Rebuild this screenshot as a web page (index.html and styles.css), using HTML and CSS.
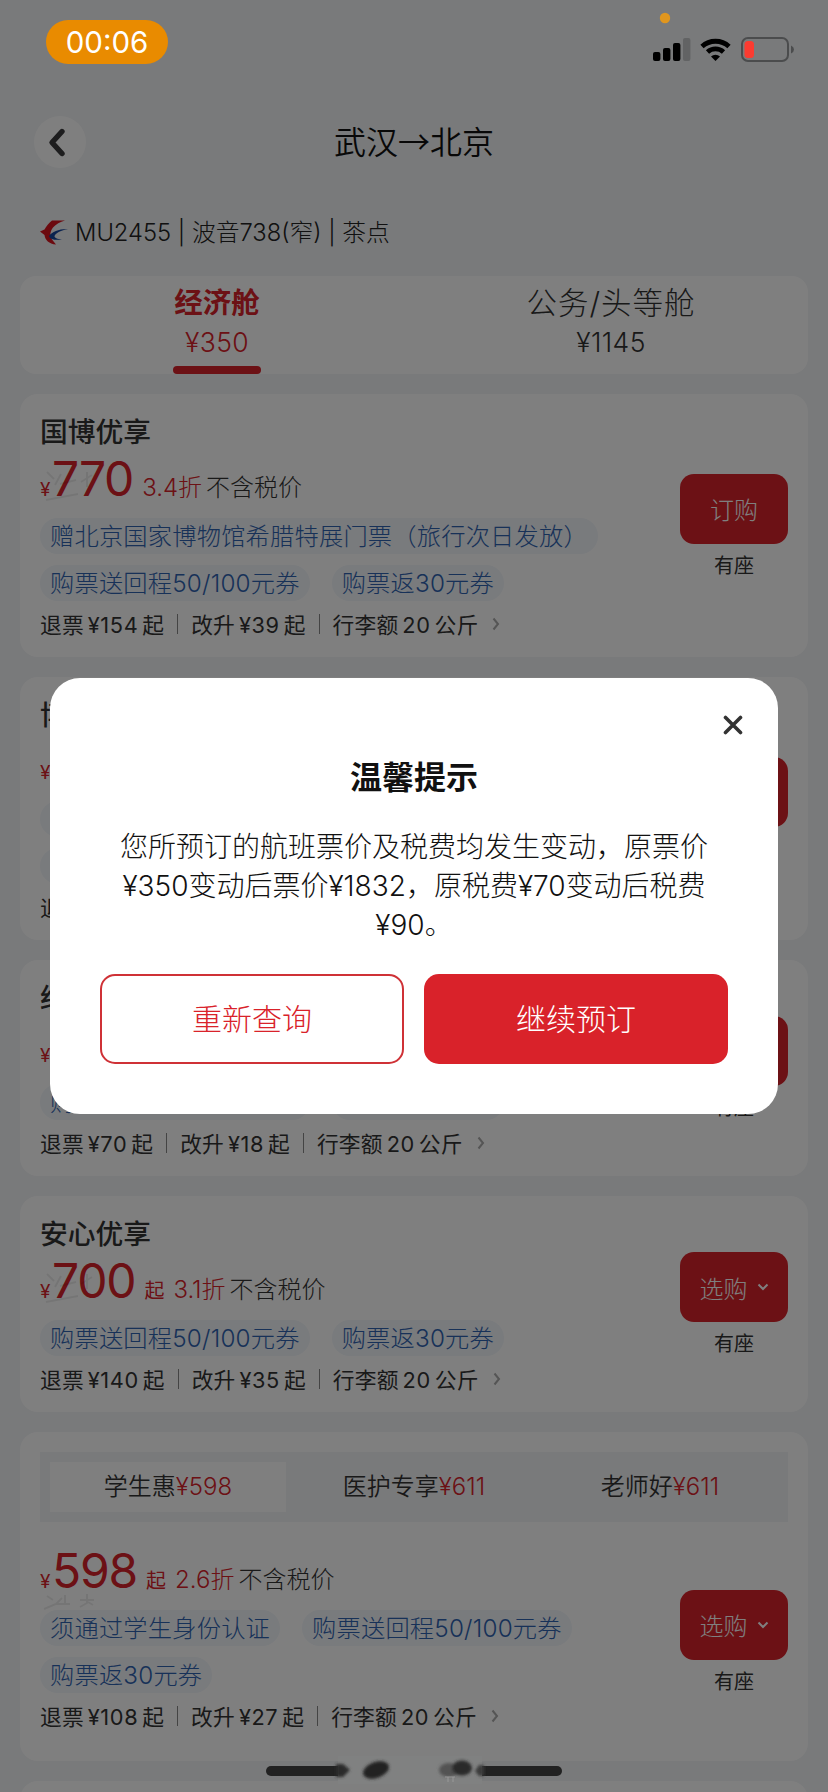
FILE: index.html
```html
<!DOCTYPE html>
<html lang="zh-CN">
<head>
<meta charset="utf-8">
<title>武汉→北京</title>
<link rel="stylesheet" href="styles.css">
</head>
<body>
<div class="screen">
  <header class="nav">
    <button class="back" aria-label="返回"><svg width="52" height="52" viewBox="0 0 52 52"><path d="M28.500 16 L18.500 27 L28.500 38" transform="translate(-.5 -.5)" fill="none" stroke="#3a3a3c" stroke-width="5.4" stroke-linecap="round" stroke-linejoin="round"/></svg></button>
    <h1 class="route">武汉→北京</h1>
  </header>
  <div class="flight">
    <svg width="28" height="25" viewBox="0 0 28 25"><path d="M25 .5H12C9 3 6 6.500 4.500 9.500L0 11.500 4.500 15C5 20 9 24 16 24.500L12 19.500C9.500 16.500 10 11 13 7.500 16 4 20 2 25 .500Z" fill="#d8141f"/><path d="M28 9C20 8.500 12 11.500 9 16 10 19.500 15 20.500 22 19.500 17 19 14.500 18 14.500 16 16 12.500 21 10.500 28 9Z" fill="#17479e"/></svg>
    <span class="flight-text">MU2455 | 波音738(窄) | 茶点</span>
  </div>

  <div class="cabins">
    <div class="cabin cabin-on"><span class="cabin-name">经济舱</span><span class="cabin-price">¥350</span><i class="cabin-bar"></i></div>
    <div class="cabin"><span class="cabin-name">公务/头等舱</span><span class="cabin-price">¥1145</span></div>
  </div>

  <section class="card">
    <div class="info">
      <h2 class="name">国博优享</h2>
      <div class="fare"><span class="yen">¥</span><span class="amount">770</span><span class="off">3.4折</span><span class="tax">不含税价</span>
        <svg class="mark" width="60" height="44" viewBox="0 0 60 44"><path d="M5 12 12 19M13 25 19 14M18 24 34 20M45 12V27M39 22 50 15M4 40 36 34"/></svg></div>
      <div class="tags"><span class="tag">赠北京国家博物馆希腊特展门票（旅行次日发放）</span><span class="tag">购票送回程50/100元券</span><span class="tag">购票返30元券</span></div>
      <div class="rules"><span>退票<b>¥154</b>起</span><i></i><span>改升<b>¥39</b>起</span><i></i><span>行李额<b>20</b>公斤</span><svg class="more" width="8" height="14" viewBox="0 0 8 14"><path d="M1.500 1.500 6 7 1.500 12.500"/></svg></div>
    </div>
    <div class="action"><button class="buy">订购</button><span class="seat">有座</span></div>
  </section>

  <section class="card">
    <div class="info">
      <h2 class="name">博</h2>
      <div class="fare fare-short"><span class="yen">¥</span></div>
      <div class="tags"><span class="tag tag-full"></span><span class="tag tag-long"></span></div>
      <div class="rules"><span>退</span></div>
    </div>
    <div class="action"><button class="buy"></button><span class="seat"></span></div>
  </section>

  <section class="card">
    <div class="info">
      <h2 class="name">经</h2>
      <div class="fare fare-short"><span class="yen">¥</span></div>
      <div class="tags"><span class="tag tag-long">购票</span><span class="tag tag-short"></span></div>
      <div class="rules"><span>退票<b>¥70</b>起</span><i></i><span>改升<b>¥18</b>起</span><i></i><span>行李额<b>20</b>公斤</span><svg class="more" width="8" height="14" viewBox="0 0 8 14"><path d="M1.500 1.500 6 7 1.500 12.500"/></svg></div>
    </div>
    <div class="action"><button class="buy"></button><span class="seat">有座</span></div>
  </section>

  <section class="card">
    <div class="info">
      <h2 class="name">安心优享</h2>
      <div class="fare"><span class="yen">¥</span><span class="amount">700</span><span class="from">起</span><span class="off">3.1折</span><span class="tax">不含税价</span>
        <svg class="mark" width="60" height="44" viewBox="0 0 60 44"><path d="M5 12 12 19M13 25 19 14M18 24 34 20M45 12V27M39 22 50 15M4 40 36 34"/></svg></div>
      <div class="tags"><span class="tag">购票送回程50/100元券</span><span class="tag">购票返30元券</span></div>
      <div class="rules"><span>退票<b>¥140</b>起</span><i></i><span>改升<b>¥35</b>起</span><i></i><span>行李额<b>20</b>公斤</span><svg class="more" width="8" height="14" viewBox="0 0 8 14"><path d="M1.500 1.500 6 7 1.500 12.500"/></svg></div>
    </div>
    <div class="action"><button class="buy">选购<svg width="12" height="8" viewBox="0 0 12 8"><path d="M1.500 1.500 6 6 10.500 1.500"/></svg></button><span class="seat">有座</span></div>
  </section>

  <section class="card card-group">
    <div class="segments"><span class="segment segment-on">学生惠<b>¥598</b></span><span class="segment">医护专享<b>¥611</b></span><span class="segment">老师好<b>¥611</b></span></div>
    <div class="group-body">
      <div class="info">
        <div class="fare"><span class="yen">¥</span><span class="amount">598</span><span class="from">起</span><span class="off">2.6折</span><span class="tax">不含税价</span>
          <svg class="mark mark-low" width="60" height="20" viewBox="0 0 60 20"><path d="M5 4 11 8M2 17 14 12 20 6M14 12H28M23 3V12M38 8H52M45 2V11L38 15M46 10 51 13"/></svg></div>
        <div class="tags"><span class="tag">须通过学生身份认证</span><span class="tag">购票送回程50/100元券</span><span class="tag">购票返30元券</span></div>
        <div class="rules"><span>退票<b>¥108</b>起</span><i></i><span>改升<b>¥27</b>起</span><i></i><span>行李额<b>20</b>公斤</span><svg class="more" width="8" height="14" viewBox="0 0 8 14"><path d="M1.500 1.500 6 7 1.500 12.500"/></svg></div>
      </div>
      <div class="action"><button class="buy">选购<svg width="12" height="8" viewBox="0 0 12 8"><path d="M1.500 1.500 6 6 10.500 1.500"/></svg></button><span class="seat">有座</span></div>
    </div>
  </section>

  <section class="card card-next"></section>
</div>

<div class="overlay">
  <div class="dialog" role="dialog">
    <button class="close" aria-label="关闭"><svg width="20" height="20" viewBox="0 0 20 20"><path d="M2.500 2.500 17.500 17.500M17.500 2.500 2.500 17.500" stroke="#333" stroke-width="3.600" stroke-linecap="round"/></svg></button>
    <h3 class="dialog-title">温馨提示</h3>
    <p class="dialog-text">您所预订的航班票价及税费均发生变动，原票价<br>¥350变动后票价¥1832，原税费¥70变动后税费<br>¥90。</p>
    <div class="dialog-actions"><button class="btn btn-line">重新查询</button><button class="btn btn-fill">继续预订</button></div>
  </div>
</div>

<div class="status">
  <span class="clock">00:06</span>
  <svg class="indicators" width="150" height="60" viewBox="0 0 150 60">
    <circle cx="20" cy="14" r="5.200" fill="#e0961e"/>
    <rect x="8" y="48" width="7.400" height="9" rx="2"/><rect x="18" y="44" width="7.400" height="13" rx="2"/><rect x="28" y="39" width="7.400" height="18" rx="2"/><rect x="38" y="34" width="7.400" height="23" rx="2" fill="#626364"/>
    <g fill="none" stroke="#000" stroke-width="4.800"><path d="M57 42.500A20 20 0 0 1 84 42.500"/><path d="M62.500 48A12 12 0 0 1 78.500 48"/></g><path d="M66 52.500A6.500 6.500 0 0 1 75 52.500L70.500 57Z"/>
    <rect x="97" y="34" width="46" height="23" rx="6" fill="none" stroke="#4b4c4d" stroke-width="2"/><rect x="99.500" y="37" width="9.500" height="17" rx="3.500" fill="#fb3b31"/><path d="M146 41.500Q149 43 149 45.500 149 48 146 49.500Z" fill="#4b4c4d"/>
  </svg>
</div>

<svg class="home" width="296" height="30" viewBox="0 0 296 30">
  <defs><filter id="soft" x="-20%" y="-30%" width="140%" height="160%"><feGaussianBlur stdDeviation="1.500"/></filter></defs>
  <rect y="11" width="296" height="10" rx="5" fill="#222"/>
  <rect x="72" y="1" width="144" height="28" fill="#808181"/>
  <g filter="url(#soft)"><path d="M70 9H77L84 15 77 22H70Z" fill="#2b2b2b"/><ellipse cx="110" cy="15" rx="13.500" ry="8" transform="rotate(-20 110 15)" fill="#242424"/><ellipse cx="183" cy="15" rx="10" ry="7" fill="#525252"/><ellipse cx="196" cy="13" rx="10" ry="7.500" fill="#292929"/><path d="M218 10H213L209 16 213 21H218Z" fill="#3a3a3a"/></g>
  <path d="M179 22H189M182 22V27M187 22V27" fill="none" stroke="#999" stroke-width="1"/>
</svg>
</body>
</html>
```
FILE: styles.css
```css
* { box-sizing: border-box; }
body {
  margin: 0; width: 828px; height: 1792px; overflow: hidden; position: relative;
  background: #f2f4f6; color: #333;
  font-family: Inter, "Noto Sans CJK SC", sans-serif; font-weight: 300;
}
button { border: 0; padding: 0; font: inherit; }
h1, h2, h3, p { margin: 0; font-weight: inherit; }
svg { display: block; flex: none; }

.screen { height: 1792px; overflow: hidden; padding: 115px 20px 0; }
.nav { display: grid; grid-template-columns: 52px 1fr 52px; align-items: center; height: 53px; padding: 0 14px; }
.back { width: 52px; height: 52px; border-radius: 50%; background: #fff; }
.route { text-align: center; font-size: 32px; line-height: 49px; padding-bottom: 3px; color: #111; font-family: "Noto Sans CJK SC", sans-serif; font-weight: 350; }
.flight { display: flex; align-items: center; gap: 7px; height: 40px; margin: 44px 20px 24px; font-size: 23.750px; color: #222; }
.flight-text { line-height: 40px; padding-top: 2px; }

.cabins { display: grid; grid-template-columns: 1fr 1fr; height: 98px; border-radius: 16px; background: #fff; margin-bottom: 20px; }
.cabin { display: flex; flex-direction: column; align-items: center; padding-top: 8px; }
.cabin-name { font-size: 30.500px; letter-spacing: 1px; line-height: 38px; }
.cabin-price { font-size: 26.500px; letter-spacing: .4px; line-height: 40px; font-weight: 350; }
.cabin-on { color: #d9222a; }
.cabin-on .cabin-name { font-size: 28.500px; letter-spacing: 0; font-weight: 700; }
.cabin-bar { width: 88px; height: 8px; border-radius: 4px; background: #d9222a; margin-top: 4px; }

.card { display: flex; justify-content: space-between; align-items: center; border-radius: 18px; background: #fff; padding: 20px 20px 8px; margin-bottom: 20px; }
.info { width: 600px; }
.card > .action { margin-top: -12px; }
.name { font-size: 27.750px; line-height: 36px; font-weight: 500; }
.fare { position: relative; display: flex; align-items: baseline; height: 68px; line-height: 58px; white-space: nowrap; }
.fare-short { padding-top: 11px; }
.yen, .amount, .off, .from { color: #d9222a; }
.yen { font-size: 19px; width: 12px; font-weight: 400; }
.amount { font-size: 48px; letter-spacing: -1.200px; font-weight: 380; margin-right: 9px; }
.from { font-size: 20px; font-weight: 400; margin-right: 9px; }
.off { font-size: 24px; margin-right: 4px; }
.tax { font-size: 24px; }
.mark { position: absolute; left: 2px; top: 10px; fill: none; stroke: rgba(0, 0, 0, .08); stroke-width: 2; }
.mark-low { top: 50px; }
.tags { display: flex; flex-wrap: wrap; gap: 11px 22px; }
.tag { height: 36px; line-height: 38px; border-radius: 18px; padding: 0 10px; background: #f2f6fb; color: #2f63b0; font-size: 24.250px; letter-spacing: .2px; white-space: nowrap; }
.tag-full { width: 555px; }
.tag-long { width: 270px; }
.tag-short { width: 172px; }
.rules { display: flex; align-items: center; height: 48px; padding-bottom: 3px; font-size: 21.750px; letter-spacing: .15px; font-weight: 380; white-space: nowrap; }
.rules b { font-weight: 380; margin: 0 4px; letter-spacing: .6px; }
.rules i { width: 1px; height: 20px; background: #888; margin: 0 13px; }
.more { margin-left: 14px; fill: none; stroke: #aaa; stroke-width: 2; }
.action { display: flex; flex-direction: column; align-items: center; width: 108px; }
.buy { display: flex; align-items: center; justify-content: center; gap: 9px; width: 108px; height: 70px; border-radius: 14px; background: #d9222a; color: #fff; font-size: 24px; }
.buy svg { fill: none; stroke: #fff; stroke-width: 2; }
.seat { height: 24px; font-size: 20px; line-height: 24px; margin-top: 10px; font-weight: 400; }

.card-group { display: block; padding: 20px 20px 0; }
.segments { display: grid; grid-template-columns: 1fr 1fr 1fr; gap: 10px; padding: 10px; height: 70px; background: #f2f4f6; }
.segment { text-align: center; font-size: 24px; line-height: 50px; font-weight: 350; }
.segment b { color: #d9222a; font-weight: 350; }
.segment-on { background: #fff; }
.group-body { display: flex; justify-content: space-between; align-items: center; padding: 20px 0; }
.card-next { height: 40px; }

.overlay { position: absolute; inset: 0; background: rgba(0, 0, 0, .5); }
.dialog { position: absolute; left: 50px; top: 678px; width: 728px; height: 436px; border-radius: 30px; background: #fff; padding: 80px 50px 50px; color: #111; }
.close { position: absolute; right: 35px; top: 37px; background: none; }
.dialog-title { text-align: center; font-size: 32px; line-height: 40px; font-weight: 700; }
.dialog-text { text-align: center; font-size: 28px; line-height: 39px; margin-top: 30px; white-space: nowrap; }
.dialog-actions { display: grid; grid-template-columns: 1fr 1fr; gap: 20px; margin-top: 29px; }
.btn { height: 90px; border-radius: 15px; font-size: 30px; line-height: 86px; }
.btn-line { border: 2px solid #cf3136; background: #fff; color: #d9222a; }
.btn-fill { background: #d9222a; color: #fff; }

.status { position: absolute; left: 0; top: 0; width: 828px; height: 64px; display: flex; justify-content: space-between; padding: 0 33px 0 46px; }
.clock { margin-top: 20px; width: 122px; height: 44px; border-radius: 22px; background: #e98b00; color: #fff; font-size: 29.500px; line-height: 45px; font-weight: 400; text-align: center; }
.indicators { margin-top: 4px; }
.home { position: absolute; left: 266px; top: 1755px; }
```
